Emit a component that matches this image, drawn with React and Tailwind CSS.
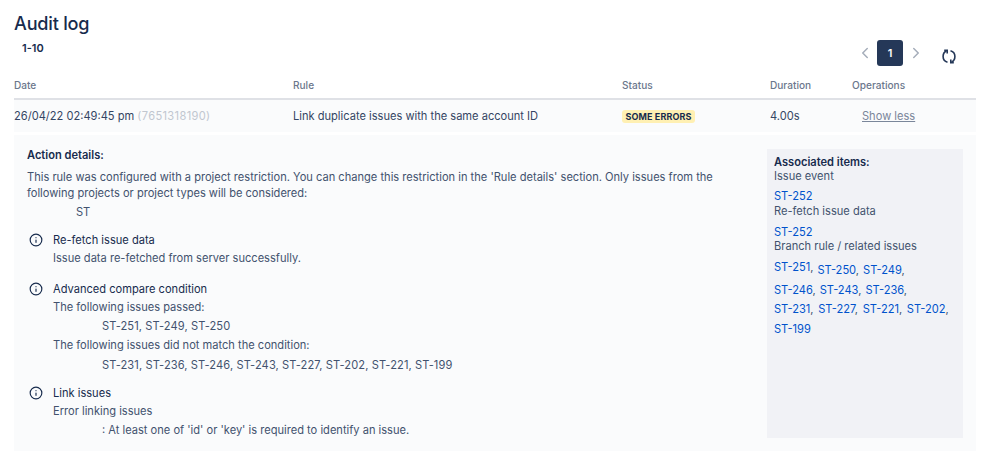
import React from "react";
import { ChevronLeft, ChevronRight, Info } from "lucide-react";

const font = "font-['Inter','Liberation_Sans',sans-serif]";
const columns = "grid grid-cols-[279px_329px_148px_82px_124px]";

function Step({ title, className, children }) {
  return (
    <div className={`flex ${className || ""}`}>
      <div className="flex h-[18px] w-[26px] shrink-0 items-center pl-[2px] text-[#172b4d]">
        <Info size={14} strokeWidth={2} />
      </div>
      <div>
        <div className="h-[18px] leading-[18px] text-[#172b4d]">{title}</div>
        {children}
      </div>
    </div>
  );
}

function Line({ children }) {
  return <div className="h-[18px] leading-[18px]">{children}</div>;
}

function IndentLine({ className, children }) {
  return <div className={`mt-[1.5px] mb-[1px] h-[18px] pl-[49px] leading-[18px] ${className || ""}`}>{children}</div>;
}

function Issue({ children, comma = true, low }) {
  return (
    <span className={low ? "relative top-[3px]" : ""}>
      <span className="text-[#0052cc]">{children}</span>
      {comma && <span>,</span>}
    </span>
  );
}

export default function App() {
  return (
    <div className={`${font} h-[457px] w-[999px] overflow-hidden bg-white pl-[14px] text-[11.1px] text-[#42526e]`}>
      <h1 className="pt-[11px] text-[18.1px] leading-[24px] font-medium tracking-[-0.2px] text-[#172b4d]">Audit log</h1>
      <div className="flex h-[38px] w-[962px]">
        <div className="pt-[6px] pl-[8px] text-[11px] leading-[14px] font-semibold text-[#172b4d]">1-10</div>
        <div className="mt-[5px] ml-auto flex h-[26px] items-center pr-[20px]">
          <ChevronLeft size={18} className="mr-[3px] text-[#a5adba]" />
          <div className="flex h-[26px] w-[26px] items-center justify-center rounded-[3px] bg-[#253858] text-[11px] font-semibold text-white">1</div>
          <ChevronRight size={18} className="mr-[17px] ml-[4px] text-[#a5adba]" />
          <svg width="14" height="15" viewBox="0 0 14 15" fill="none" stroke="#253858" strokeWidth="1.6" className="mt-[7px]">
            <path d="M5.5 13.2 C3 12.5 1.1 10.5 1.1 7.5 C1.1 5 2.2 3 4.4 1.8" />
            <path d="M2.2 1.4 H5.2 V4.4" />
            <path d="M8.5 1.8 C11 2.5 12.9 4.5 12.9 7.5 C12.9 10 11.8 12 9.6 13.2" />
            <path d="M11.8 13.6 H8.8 V10.6" />
          </svg>
        </div>
      </div>

      <div className="w-[962px]">
        <div className={`${columns} h-[27px] border-b-2 border-[#dfe1e6] text-[10.1px] leading-[24px] font-medium text-[#6b778c]`}>
          <div>Date</div>
          <div>Rule</div>
          <div>Status</div>
          <div>Duration</div>
          <div>Operations</div>
        </div>

        <div className={`${columns} h-[32px] items-center bg-[#fafbfc] pt-[1px]`}>
          <div className="text-[#344563]">
            26/04/22 02:49:45 pm <span className="tracking-[0.35px] text-[#c1c7d0]">(7651318190)</span>
          </div>
          <div className="text-[#344563]">Link duplicate issues with the same account ID</div>
          <div>
            <span className="inline-block h-[13px] rounded-[3px] bg-[#fff0b3] px-[3.5px] text-[9px] leading-[13px] font-bold tracking-[0.1px] text-[#172b4d]">SOME ERRORS</span>
          </div>
          <div className="text-[#344563]">4.00s</div>
          <div className="pl-[10px] text-[#7a869a] underline">Show less</div>
        </div>

        <div className="mt-[3px] flex h-[316px] bg-[#fafbfc] pt-[13px] pr-[13px] pl-[13px]">
          <div className="w-[740px] shrink-0">
            <div className="h-[14px] leading-[14px] font-semibold text-[#172b4d]">Action details:</div>
            <div className="mt-[6.7px] w-[720px] leading-[16px]">
              This rule was configured with a project restriction. You can change this restriction in the 'Rule details' section. Only issues from the following projects or project types will be considered:
            </div>
            <div className="mt-[2.5px] h-[18px] pl-[49px] leading-[18px]">ST</div>

            <div className="mt-[10px] flex flex-col gap-[8.7px]">
              <Step title="Re-fetch issue data" className="pb-[4px]">
                <Line>Issue data re-fetched from server successfully.</Line>
              </Step>
              <Step title="Advanced compare condition">
                <Line>The following issues passed:</Line>
                <IndentLine className="tracking-[0.1px]">ST-251, ST-249, ST-250</IndentLine>
                <Line>The following issues did not match the condition:</Line>
                <IndentLine className="tracking-[0.1px]">ST-231, ST-236, ST-246, ST-243, ST-227, ST-202, ST-221, ST-199</IndentLine>
              </Step>
              <Step title="Link issues">
                <Line>Error linking issues</Line>
                <IndentLine>: At least one of 'id' or 'key' is required to identify an issue.</IndentLine>
              </Step>
            </div>
          </div>

          <div className="mt-[1px] h-[289px] w-[196px] bg-[#f1f2f6] pt-[5.5px] pl-[7px]">
            <div className="h-[14px] leading-[14px] font-semibold text-[#172b4d]">Associated items:</div>
            <div className="h-[14px] leading-[14px]">Issue event</div>
            <div className="mt-[6.5px] h-[14px] leading-[14px] text-[#0052cc]">ST-252</div>
            <div className="mt-[0.7px] h-[14px] leading-[14px]">Re-fetch issue data</div>
            <div className="mt-[7px] h-[14px] leading-[14px] text-[#0052cc]">ST-252</div>
            <div className="mt-[0.6px] h-[14px] leading-[14px]">Branch rule / related issues</div>
            <div className="mt-[7px] flex h-[19.5px] gap-[4px] leading-[14px]">
              <Issue>ST-251</Issue>
              <Issue low>ST-250</Issue>
              <Issue low>ST-249</Issue>
            </div>
            <div className="flex h-[19.5px] items-center gap-[4px] leading-[14px]">
              <Issue>ST-246</Issue>
              <Issue>ST-243</Issue>
              <Issue>ST-236</Issue>
            </div>
            <div className="flex h-[19.5px] items-center gap-[4.7px] leading-[14px]">
              <Issue>ST-231</Issue>
              <Issue>ST-227</Issue>
              <Issue>ST-221</Issue>
              <Issue>ST-202</Issue>
            </div>
            <div className="flex h-[19.5px] items-center leading-[14px]">
              <Issue comma={false}>ST-199</Issue>
            </div>
          </div>
        </div>
      </div>
    </div>
  );
}
